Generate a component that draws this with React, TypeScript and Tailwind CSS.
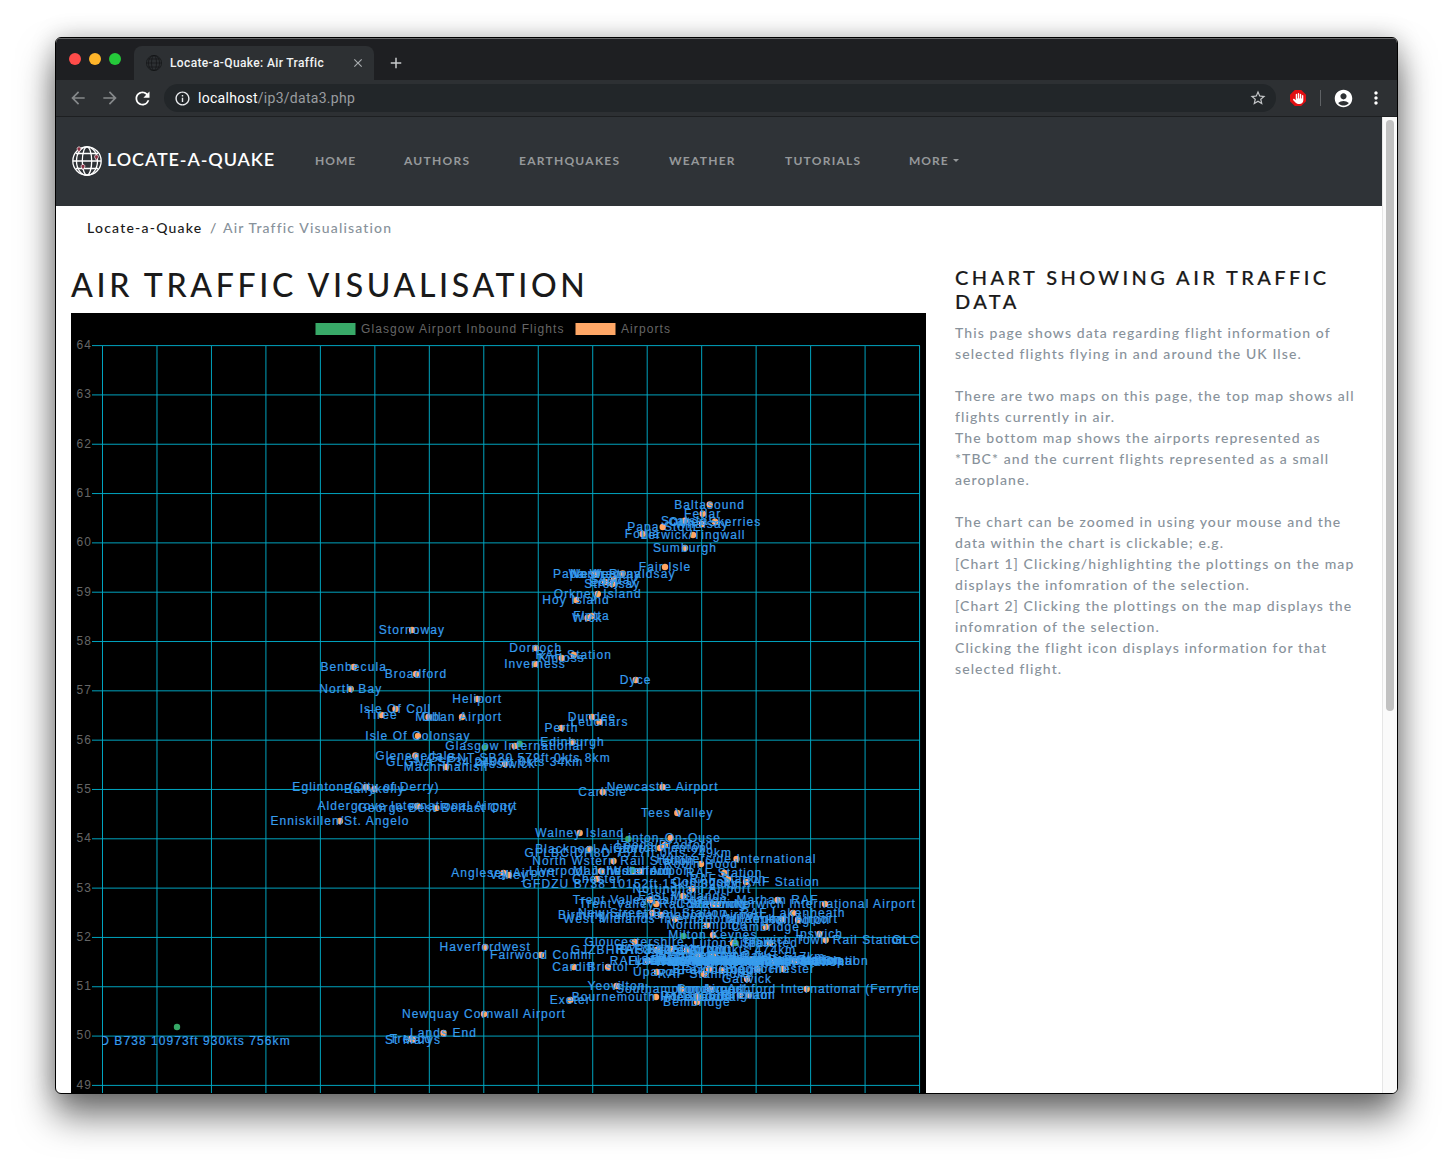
import React from "react";
import { MdArrowBack, MdArrowForward, MdRefresh, MdInfoOutline, MdStarBorder, MdAccountCircle, MdMoreVert, MdClose, MdAdd } from "react-icons/md";
import { FaHand } from "react-icons/fa6";

type Point = [label: string, x: number, y: number];

const airports: Point[] = [
  ["Baltasound", 709.7, 504.5],
  ["Fetlar", 702.7, 513.7],
  ["Scatsta", 684.7, 520.7],
  ["Whalsay", 702, 524],
  ["Outer Skerries", 715, 521.7],
  ["Papa Stour", 662.7, 527],
  ["Foula", 642.5, 534],
  ["Lerwick/Tingwall", 693, 535],
  ["Sumburgh", 685, 548],
  ["Fair Isle", 665, 567],
  ["North Ronaldsay", 622.7, 573.5],
  ["Papa Westray", 597, 574],
  ["Westray", 594.5, 574],
  ["Sanday", 614, 579.5],
  ["Eday", 605, 582],
  ["Stronsay", 612.3, 584],
  ["Orkney Island", 597.8, 594],
  ["Hoy Island", 576, 600],
  ["Flotta", 591.5, 616],
  ["Wick", 587.5, 618],
  ["Dornoch", 535.7, 648],
  ["RAF Station", 573.7, 655],
  ["Kinloss", 561.7, 658],
  ["Inverness", 535, 664],
  ["Dyce", 635.7, 680],
  ["Stornoway", 412, 630],
  ["Benbecula", 353.7, 667],
  ["Broadford", 416, 674],
  ["North Bay", 350.7, 689],
  ["Heliport", 477.3, 699],
  ["Isle Of Coll", 395.5, 709],
  ["Tiree", 381.5, 715],
  ["Mull", 428.5, 717],
  ["Oban Airport", 462, 717],
  ["Isle Of Colonsay", 418, 736],
  ["Glenegedale", 415.3, 755.5],
  ["Machrihanish", 446, 767],
  ["Prestwick", 505, 764],
  ["Glasgow International", 514.7, 746],
  ["Eglinton (City of Derry)", 366, 787],
  ["Ballykelly", 374.5, 789],
  ["Aldergrove International Airport", 417.5, 806],
  ["George Best Belfast City", 436.3, 808],
  ["Enniskillen/St. Angelo", 340, 821],
  ["Perth", 561.5, 728],
  ["Dundee", 592, 717],
  ["Leuchars", 599.5, 722],
  ["Edinburgh", 572.5, 742],
  ["Carlisle", 602.7, 792],
  ["Newcastle Airport", 662.7, 787],
  ["Tees Valley", 677.3, 813],
  ["Walney Island", 579.7, 833],
  ["Linton-On-Ouse", 670.7, 838],
  ["Leeds/Bradford", 665, 845],
  ["Church Fenton", 660, 848],
  ["Blackpool Airport", 589.5, 849],
  ["North Wstern Rail Station", 613.5, 861],
  ["Humberside International", 736.5, 859],
  ["Robin Hood", 701, 864],
  ["Anglesey Airport", 503.5, 873],
  ["Valley", 509, 875],
  ["Liverpool John Lennon", 601, 871],
  ["Manchester Airport", 633, 871],
  ["Woodford", 640, 871],
  ["Chester", 597, 879],
  ["RAF Station", 724.3, 873],
  ["RAF Station", 728, 879],
  ["Coningsby RAF Station", 746, 882],
  ["Nottingham Airport", 692, 889],
  ["East Midlands", 683, 896],
  ["Trent Valley Rail Station", 650, 900],
  ["Trent Valley Rail Station", 656.3, 904],
  ["Cottesmore", 713, 904],
  ["Wittering", 718, 904],
  ["Norwich International Airport", 825, 904],
  ["Marham RAF", 777.5, 900],
  ["New Street Rail Station", 652.5, 913],
  ["Birmingham International Airport", 661, 915],
  ["West Midlands International Airport", 675, 919],
  ["RAF Lakenheath", 793, 913],
  ["Mildenhall Airport", 782.3, 919],
  ["Honington", 798, 920],
  ["Northampton", 707, 925],
  ["Cambridge", 765.7, 927],
  ["Milton Keynes", 713, 935],
  ["Ipswich", 819.3, 934],
  ["Ipswich Town Rail Station", 825.7, 940],
  ["Stansted", 770, 943],
  ["Gloucestershire", 634.7, 942],
  ["Luton Airport", 733, 943],
  ["Haverfordwest", 485.3, 947],
  ["Fairwood Comm", 541, 955],
  ["Cardiff", 573.7, 967],
  ["Bristol", 608, 967],
  ["RAF Brize Norton", 671, 949],
  ["RAF Fairford", 656.7, 950],
  ["Oxford Airport", 687, 950],
  ["RAF Benson", 698, 955],
  ["Wycombe Air Park", 713, 956],
  ["RAF Station", 648, 961],
  ["Lyneham RAF Station", 697, 961],
  ["Denham Rail Station", 716, 960],
  ["London Paddington Rail Station", 735, 961],
  ["London Kings Cross Rail Station", 740, 960],
  ["London Heathrow", 727, 962],
  ["London City Airport", 757, 961],
  ["Liverpool Street Rail Station", 752, 960],
  ["Stratford International Station", 774, 961],
  ["Southend Municipal", 794, 961],
  ["Waterloo International Station", 750, 962],
  ["Upavon", 657, 972],
  ["Blackbushe", 709, 969],
  ["RAF Stanmore", 704, 974],
  ["Farnborough", 722, 970],
  ["Biggin Hill", 757.5, 969],
  ["Rochester", 783, 969],
  ["Gatwick", 747, 979],
  ["Yeovilton", 616.5, 986],
  ["Southampton Airport", 681, 989],
  ["Goodwood", 710, 989],
  ["London Ashford International (Ferryfield)", 806.7, 989],
  ["Bournemouth International", 656, 997],
  ["Exeter", 570.3, 1000],
  ["Portsmouth", 697, 996],
  ["Fleetlands", 698, 997],
  ["Shoreham", 740, 995],
  ["Brighton", 749, 995],
  ["Bembridge", 697, 1002],
  ["Newquay Cornwall Airport", 484, 1014],
  ["Lands End", 443.5, 1033],
  ["Tresco", 411, 1039],
  ["St Marys", 413, 1040],
];

const flights: Point[] = [
  ["GFDZD B738 10973ft 930kts 756km", 177, 1027],
  ["GLGNA SF34 2400ft 0kts 34km", 484.7, 747.5],
  ["GLGNT SB20 579ft 0kts 8km", 519.7, 744],
  ["GFLBC DH8D 7517ft 0kts 249km", 628.3, 839],
  ["GFDZU B738 10152ft 15kts 320km", 632.5, 870],
  ["GJZBH B738 12500ft 400kts 474km", 683.5, 936],
  ["GEZTD A320 0ft 0kts 517km", 735.5, 943],
  ["GLCYA E190 10000ft 0kts 560km", 997, 926],
];

const columns = Array.from({ length: 16 }, (_, i) => 102.5 + i * 54.47);
const rows = Array.from({ length: 16 }, (_, i) => 345.6 + i * 49.32);

function Chart() {
  return (
    <svg className="block h-[780px] w-[855px] bg-black" viewBox="71 313 855 780" fontFamily="Liberation Sans, Arial, sans-serif" fontSize="12" letterSpacing="1.08">
      <defs>
        <clipPath id="plot">
          <rect x="102" y="346" width="818" height="760" />
        </clipPath>
      </defs>
      <rect x="315.5" y="323" width="40" height="12" fill="#38a968" />
      <text x="361" y="333" fill="#666">Glasgow Airport Inbound Flights</text>
      <rect x="575.5" y="323" width="40" height="12" fill="#ffa766" />
      <text x="621" y="333" fill="#666">Airports</text>
      <g stroke="#00acc8" strokeOpacity=".95">
        {columns.map((x) => <line key={x} x1={x} x2={x} y1="346" y2="1093" />)}
        {rows.map((y) => <line key={y} x1="92" x2="920" y1={y} y2={y} />)}
      </g>
      <g fill="#666">
        {rows.map((y, i) => <text key={y} x="76.6" y={y + 3.4}>{64 - i}</text>)}
      </g>
      <g clipPath="url(#plot)">
        {airports.map(([, x, y], i) => <circle key={i} cx={x} cy={y} r="3.2" fill="#ffa562" />)}
        {flights.map(([, x, y], i) => <circle key={i} cx={x} cy={y} r="3.2" fill="#36a866" />)}
        <g fill="#369cee" stroke="#369cee" strokeWidth=".2" textAnchor="middle">
          {airports.map(([label, x, y], i) => <text key={i} x={x} y={y + 4.2}>{label}</text>)}
          {flights.map(([label, x, y], i) => <text key={i} x={x} y={y + 18.2}>{label}</text>)}
        </g>
      </g>
    </svg>
  );
}

function Globe({ className, pins }: { className: string; pins?: boolean }) {
  return (
    <svg className={className} viewBox="0 0 30 30" fill="none" stroke="currentColor" strokeWidth="1.3">
      <circle cx="15" cy="15" r="14.2" />
      <ellipse cx="15" cy="15" rx="10.5" ry="14.2" />
      <ellipse cx="15" cy="15" rx="4.7" ry="14.2" />
      <path d="M1 15h28M4 7.5h22M4 22.5h22" />
      {pins && (
        <g fill="#8d2f42" stroke="#fff" strokeWidth=".7">
          <path d="M7 6.5L5.3 3.6a1.9 1.9 0 1 1 3.4 0z" />
          <path d="M24.5 14.5l-1.7-2.9a1.9 1.9 0 1 1 3.4 0z" />
          <path d="M11 24l-1.7-2.9a1.9 1.9 0 1 1 3.4 0z" />
        </g>
      )}
    </svg>
  );
}

function BrowserChrome() {
  return (
    <>
      <div className="flex h-[42px] shrink-0 border-t border-[#68696a] bg-[#1e1f22]">
        <div className="flex w-[78px] gap-2 pt-[14px] pl-[13px]">
          <i className="size-3 rounded-full bg-[#ff4c4a]" />
          <i className="size-3 rounded-full bg-[#ffb52a]" />
          <i className="size-3 rounded-full bg-[#25c93a]" />
        </div>
        <div className="mt-[7px] flex h-[34px] w-[240px] items-center rounded-t-lg bg-[#2d3033] pl-3">
          <Globe className="size-4 text-[#151617]" />
          <span className="ml-2 w-[181px] whitespace-nowrap font-['Roboto'] text-[12px] font-medium tracking-[0.36px] text-[#f1f3f4]">Locate-a-Quake: Air Traffic</span>
          <MdClose className="size-[14px] text-[#a8abae]" />
        </div>
        <MdAdd className="mt-[15px] ml-[13px] size-[18px] text-[#c9cbcd]" />
      </div>
      <div className="flex h-9 shrink-0 items-center bg-[#2d3033] text-white">
        <MdArrowBack className="ml-[12px] size-[20px] text-[#85888a]" />
        <MdArrowForward className="ml-[12px] size-[20px] text-[#85888a]" />
        <MdRefresh className="ml-[12px] size-[21px]" />
        <div className="ml-[11px] flex h-7 w-[1112px] items-center rounded-full bg-[#222629] pl-[10px] font-['Roboto'] text-[14px]">
          <MdInfoOutline className="size-[17px] text-[#e8eaed]" />
          <span className="ml-[7px] tracking-[0.28px]">localhost<span className="text-[#9a9da0]">/ip3/data3.php</span></span>
          <MdStarBorder className="mr-[9px] ml-auto size-[18px] text-[#c4c6c8]" />
        </div>
        <span className="ml-[14px] flex size-4 items-center justify-center bg-[#e20f12] [clip-path:polygon(30%_0,70%_0,100%_30%,100%_70%,70%_100%,30%_100%,0_70%,0_30%)]">
          <FaHand className="size-[11px]" />
        </span>
        <i className="ml-[14px] h-4 w-px bg-[#5f6265]" />
        <MdAccountCircle className="ml-[12px] size-[21px]" />
        <MdMoreVert className="ml-[12px] size-5" />
      </div>
      <div className="h-px shrink-0 bg-[#1d1f21]" />
    </>
  );
}

function Navbar() {
  return (
    <nav className="flex h-[89px] items-center bg-[#2f3337] pb-[2px] pl-[16px] font-bold whitespace-nowrap">
      <Globe pins className="size-[30px] text-white" />
      <span className="mt-[-2px] ml-[5px] w-[208px] text-[18px] font-semibold tracking-[0.9px] text-white">LOCATE-A-QUAKE</span>
      <div className="flex text-[12px] tracking-[1.25px] text-[#96999b]">
        <span className="w-[89px] tracking-[1px]">HOME</span>
        <span className="w-[115px]">AUTHORS</span>
        <span className="w-[150px]">EARTHQUAKES</span>
        <span className="w-[116px]">WEATHER</span>
        <span className="w-[124px]">TUTORIALS</span>
        <span className="flex items-center tracking-[1px]">
          MORE
          <i className="ml-[4px] border-x-[3px] border-t-[3px] border-x-transparent border-t-[#96999b]" />
        </span>
      </div>
    </nav>
  );
}

const notes: string[] = [
  "This page shows data regarding flight information of",
  "selected flights flying in and around the UK Ilse.",
  "",
  "There are two maps on this page, the top map shows all",
  "flights currently in air.",
  "The bottom map shows the airports represented as",
  "*TBC* and the current flights represented as a small",
  "aeroplane.",
  "",
  "The chart can be zoomed in using your mouse and the",
  "data within the chart is clickable; e.g.",
  "[Chart 1] Clicking/highlighting the plottings on the map",
  "displays the infomration of the selection.",
  "[Chart 2] Clicking the plottings on the map displays the",
  "infomration of the selection.",
  "Clicking the flight icon displays information for that",
  "selected flight.",
];

export default function App() {
  return (
    <div className="h-[1167px] w-[1453px] overflow-hidden bg-white pt-[37px] pl-[55px] font-['Lato',sans-serif]">
      <div className="flex h-[1057px] w-[1343px] flex-col overflow-hidden rounded-[6px] border border-black bg-white shadow-[0_22px_36px_rgba(0,0,0,0.55),0_0_24px_rgba(0,0,0,0.22)]">
        <BrowserChrome />
        <div className="flex min-h-0 flex-1">
          <div className="w-[1326px] overflow-hidden">
            <Navbar />
            <div className="flex h-[52px] pt-[12px] pl-[31px] text-[14px] leading-[20px] font-medium tracking-[1.22px] whitespace-nowrap text-[#1a1a1a]">
              <span className="w-[123px]">Locate-a-Quake</span>
              <span className="w-[13px] text-[#7b838a]">/</span>
              <span className="tracking-[1.15px] text-[#88929b]">Air Traffic Visualisation</span>
            </div>
            <div className="flex pl-[15px]">
              <main className="w-[884px]">
                <h1 className="h-[55px] pt-2 text-[32px] leading-[38px] font-medium tracking-[3.65px] whitespace-nowrap text-[#1a1a1a]">AIR TRAFFIC VISUALISATION</h1>
                <Chart />
              </main>
              <aside className="pt-[7px] whitespace-nowrap">
                <h2 className="text-[20px] leading-6 font-medium tracking-[3.4px] text-[#1a1a1a] [-webkit-text-stroke:0.2px]">CHART SHOWING AIR TRAFFIC<br />DATA</h2>
                <p className="mt-[9px] text-[14px] leading-[21px] font-medium tracking-[1.08px] text-[#88929b]">
                  {notes.map((line, i) => <span key={i} className="block h-[21px]">{line}</span>)}
                </p>
              </aside>
            </div>
          </div>
          <div className="flex w-[15px] border-l border-[#e6e6e6] bg-[#fafafa] pt-[3px] pl-[3px]">
            <i className="h-[591px] w-2 rounded-full bg-[#c1c1c1]" />
          </div>
        </div>
      </div>
    </div>
  );
}
